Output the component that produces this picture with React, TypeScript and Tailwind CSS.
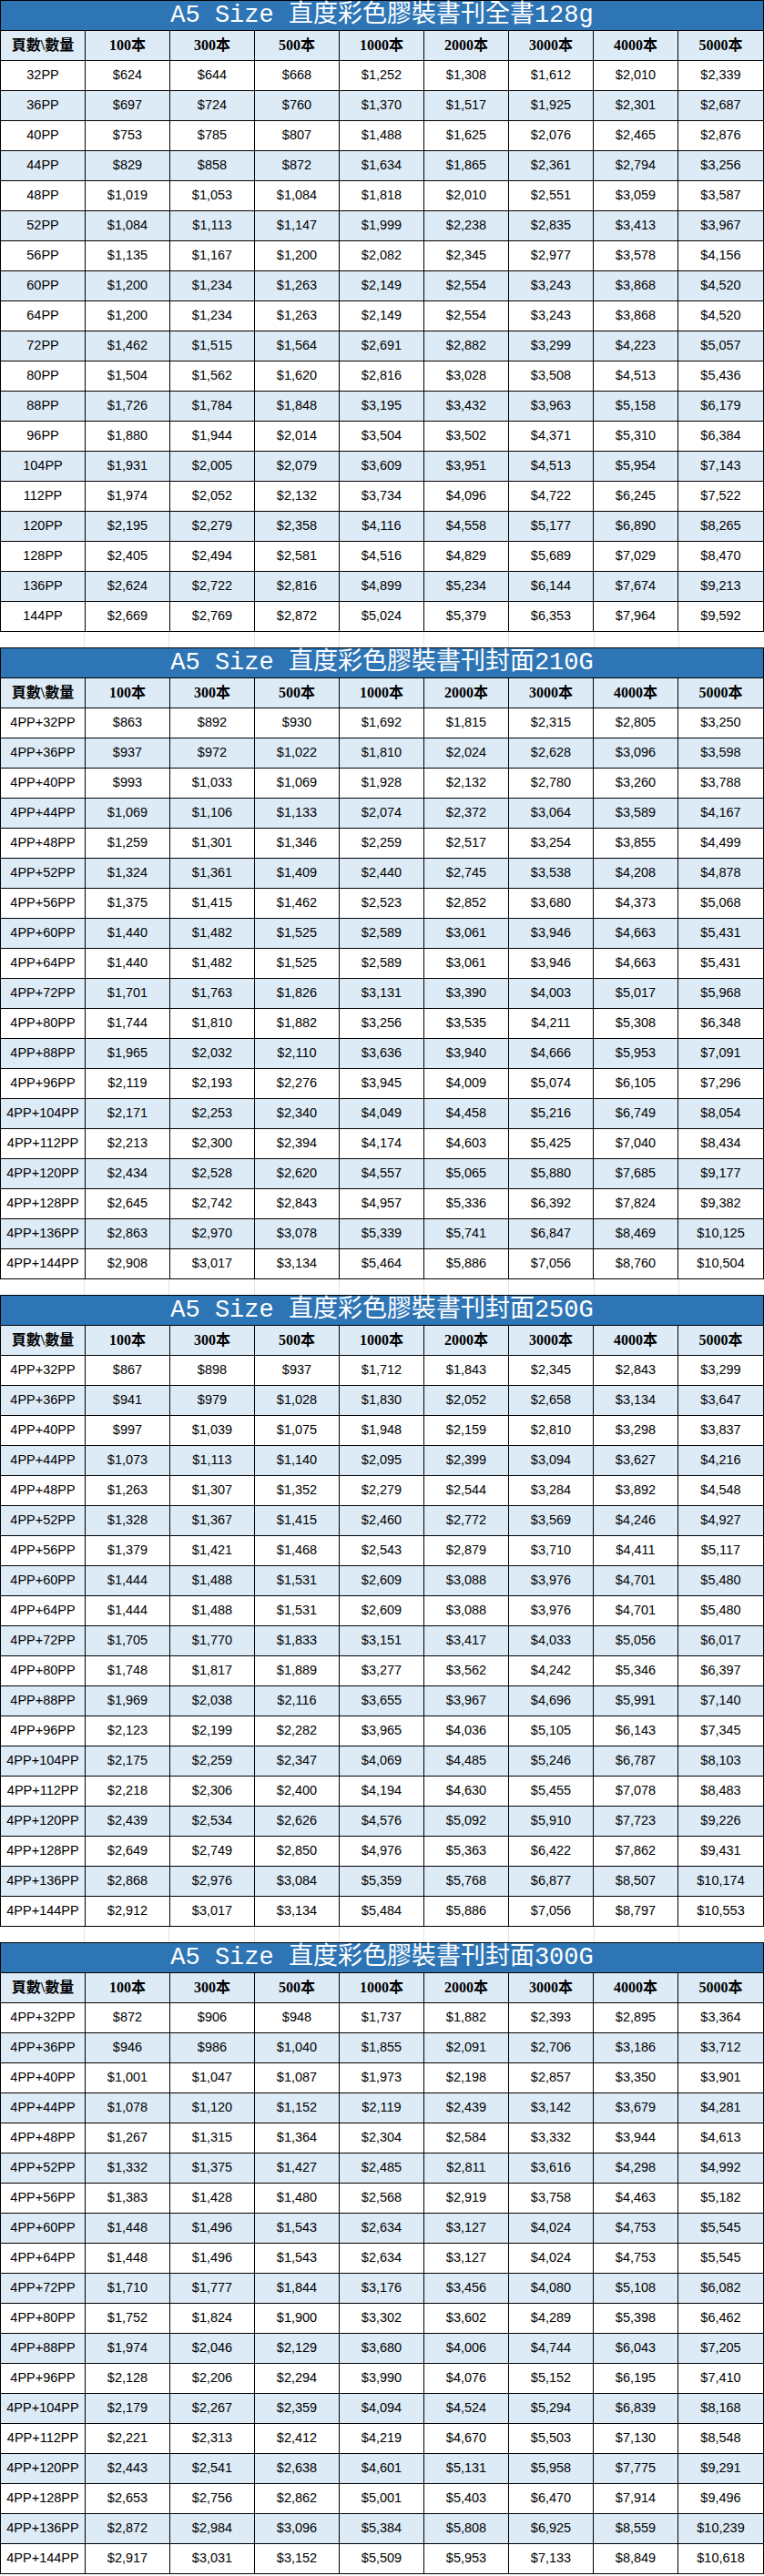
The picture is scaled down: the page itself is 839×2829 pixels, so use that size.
const cols = ['100本', '300本', '500本', '1000本', '2000本', '3000本', '4000本', '5000本'];

type Row = [string, ...string[]];

const t128: Row[] = [
  ['32PP', '$624', '$644', '$668', '$1,252', '$1,308', '$1,612', '$2,010', '$2,339'],
  ['36PP', '$697', '$724', '$760', '$1,370', '$1,517', '$1,925', '$2,301', '$2,687'],
  ['40PP', '$753', '$785', '$807', '$1,488', '$1,625', '$2,076', '$2,465', '$2,876'],
  ['44PP', '$829', '$858', '$872', '$1,634', '$1,865', '$2,361', '$2,794', '$3,256'],
  ['48PP', '$1,019', '$1,053', '$1,084', '$1,818', '$2,010', '$2,551', '$3,059', '$3,587'],
  ['52PP', '$1,084', '$1,113', '$1,147', '$1,999', '$2,238', '$2,835', '$3,413', '$3,967'],
  ['56PP', '$1,135', '$1,167', '$1,200', '$2,082', '$2,345', '$2,977', '$3,578', '$4,156'],
  ['60PP', '$1,200', '$1,234', '$1,263', '$2,149', '$2,554', '$3,243', '$3,868', '$4,520'],
  ['64PP', '$1,200', '$1,234', '$1,263', '$2,149', '$2,554', '$3,243', '$3,868', '$4,520'],
  ['72PP', '$1,462', '$1,515', '$1,564', '$2,691', '$2,882', '$3,299', '$4,223', '$5,057'],
  ['80PP', '$1,504', '$1,562', '$1,620', '$2,816', '$3,028', '$3,508', '$4,513', '$5,436'],
  ['88PP', '$1,726', '$1,784', '$1,848', '$3,195', '$3,432', '$3,963', '$5,158', '$6,179'],
  ['96PP', '$1,880', '$1,944', '$2,014', '$3,504', '$3,502', '$4,371', '$5,310', '$6,384'],
  ['104PP', '$1,931', '$2,005', '$2,079', '$3,609', '$3,951', '$4,513', '$5,954', '$7,143'],
  ['112PP', '$1,974', '$2,052', '$2,132', '$3,734', '$4,096', '$4,722', '$6,245', '$7,522'],
  ['120PP', '$2,195', '$2,279', '$2,358', '$4,116', '$4,558', '$5,177', '$6,890', '$8,265'],
  ['128PP', '$2,405', '$2,494', '$2,581', '$4,516', '$4,829', '$5,689', '$7,029', '$8,470'],
  ['136PP', '$2,624', '$2,722', '$2,816', '$4,899', '$5,234', '$6,144', '$7,674', '$9,213'],
  ['144PP', '$2,669', '$2,769', '$2,872', '$5,024', '$5,379', '$6,353', '$7,964', '$9,592'],
];

const t210: Row[] = [
  ['4PP+32PP', '$863', '$892', '$930', '$1,692', '$1,815', '$2,315', '$2,805', '$3,250'],
  ['4PP+36PP', '$937', '$972', '$1,022', '$1,810', '$2,024', '$2,628', '$3,096', '$3,598'],
  ['4PP+40PP', '$993', '$1,033', '$1,069', '$1,928', '$2,132', '$2,780', '$3,260', '$3,788'],
  ['4PP+44PP', '$1,069', '$1,106', '$1,133', '$2,074', '$2,372', '$3,064', '$3,589', '$4,167'],
  ['4PP+48PP', '$1,259', '$1,301', '$1,346', '$2,259', '$2,517', '$3,254', '$3,855', '$4,499'],
  ['4PP+52PP', '$1,324', '$1,361', '$1,409', '$2,440', '$2,745', '$3,538', '$4,208', '$4,878'],
  ['4PP+56PP', '$1,375', '$1,415', '$1,462', '$2,523', '$2,852', '$3,680', '$4,373', '$5,068'],
  ['4PP+60PP', '$1,440', '$1,482', '$1,525', '$2,589', '$3,061', '$3,946', '$4,663', '$5,431'],
  ['4PP+64PP', '$1,440', '$1,482', '$1,525', '$2,589', '$3,061', '$3,946', '$4,663', '$5,431'],
  ['4PP+72PP', '$1,701', '$1,763', '$1,826', '$3,131', '$3,390', '$4,003', '$5,017', '$5,968'],
  ['4PP+80PP', '$1,744', '$1,810', '$1,882', '$3,256', '$3,535', '$4,211', '$5,308', '$6,348'],
  ['4PP+88PP', '$1,965', '$2,032', '$2,110', '$3,636', '$3,940', '$4,666', '$5,953', '$7,091'],
  ['4PP+96PP', '$2,119', '$2,193', '$2,276', '$3,945', '$4,009', '$5,074', '$6,105', '$7,296'],
  ['4PP+104PP', '$2,171', '$2,253', '$2,340', '$4,049', '$4,458', '$5,216', '$6,749', '$8,054'],
  ['4PP+112PP', '$2,213', '$2,300', '$2,394', '$4,174', '$4,603', '$5,425', '$7,040', '$8,434'],
  ['4PP+120PP', '$2,434', '$2,528', '$2,620', '$4,557', '$5,065', '$5,880', '$7,685', '$9,177'],
  ['4PP+128PP', '$2,645', '$2,742', '$2,843', '$4,957', '$5,336', '$6,392', '$7,824', '$9,382'],
  ['4PP+136PP', '$2,863', '$2,970', '$3,078', '$5,339', '$5,741', '$6,847', '$8,469', '$10,125'],
  ['4PP+144PP', '$2,908', '$3,017', '$3,134', '$5,464', '$5,886', '$7,056', '$8,760', '$10,504'],
];

const t250: Row[] = [
  ['4PP+32PP', '$867', '$898', '$937', '$1,712', '$1,843', '$2,345', '$2,843', '$3,299'],
  ['4PP+36PP', '$941', '$979', '$1,028', '$1,830', '$2,052', '$2,658', '$3,134', '$3,647'],
  ['4PP+40PP', '$997', '$1,039', '$1,075', '$1,948', '$2,159', '$2,810', '$3,298', '$3,837'],
  ['4PP+44PP', '$1,073', '$1,113', '$1,140', '$2,095', '$2,399', '$3,094', '$3,627', '$4,216'],
  ['4PP+48PP', '$1,263', '$1,307', '$1,352', '$2,279', '$2,544', '$3,284', '$3,892', '$4,548'],
  ['4PP+52PP', '$1,328', '$1,367', '$1,415', '$2,460', '$2,772', '$3,569', '$4,246', '$4,927'],
  ['4PP+56PP', '$1,379', '$1,421', '$1,468', '$2,543', '$2,879', '$3,710', '$4,411', '$5,117'],
  ['4PP+60PP', '$1,444', '$1,488', '$1,531', '$2,609', '$3,088', '$3,976', '$4,701', '$5,480'],
  ['4PP+64PP', '$1,444', '$1,488', '$1,531', '$2,609', '$3,088', '$3,976', '$4,701', '$5,480'],
  ['4PP+72PP', '$1,705', '$1,770', '$1,833', '$3,151', '$3,417', '$4,033', '$5,056', '$6,017'],
  ['4PP+80PP', '$1,748', '$1,817', '$1,889', '$3,277', '$3,562', '$4,242', '$5,346', '$6,397'],
  ['4PP+88PP', '$1,969', '$2,038', '$2,116', '$3,655', '$3,967', '$4,696', '$5,991', '$7,140'],
  ['4PP+96PP', '$2,123', '$2,199', '$2,282', '$3,965', '$4,036', '$5,105', '$6,143', '$7,345'],
  ['4PP+104PP', '$2,175', '$2,259', '$2,347', '$4,069', '$4,485', '$5,246', '$6,787', '$8,103'],
  ['4PP+112PP', '$2,218', '$2,306', '$2,400', '$4,194', '$4,630', '$5,455', '$7,078', '$8,483'],
  ['4PP+120PP', '$2,439', '$2,534', '$2,626', '$4,576', '$5,092', '$5,910', '$7,723', '$9,226'],
  ['4PP+128PP', '$2,649', '$2,749', '$2,850', '$4,976', '$5,363', '$6,422', '$7,862', '$9,431'],
  ['4PP+136PP', '$2,868', '$2,976', '$3,084', '$5,359', '$5,768', '$6,877', '$8,507', '$10,174'],
  ['4PP+144PP', '$2,912', '$3,017', '$3,134', '$5,484', '$5,886', '$7,056', '$8,797', '$10,553'],
];

const t300: Row[] = [
  ['4PP+32PP', '$872', '$906', '$948', '$1,737', '$1,882', '$2,393', '$2,895', '$3,364'],
  ['4PP+36PP', '$946', '$986', '$1,040', '$1,855', '$2,091', '$2,706', '$3,186', '$3,712'],
  ['4PP+40PP', '$1,001', '$1,047', '$1,087', '$1,973', '$2,198', '$2,857', '$3,350', '$3,901'],
  ['4PP+44PP', '$1,078', '$1,120', '$1,152', '$2,119', '$2,439', '$3,142', '$3,679', '$4,281'],
  ['4PP+48PP', '$1,267', '$1,315', '$1,364', '$2,304', '$2,584', '$3,332', '$3,944', '$4,613'],
  ['4PP+52PP', '$1,332', '$1,375', '$1,427', '$2,485', '$2,811', '$3,616', '$4,298', '$4,992'],
  ['4PP+56PP', '$1,383', '$1,428', '$1,480', '$2,568', '$2,919', '$3,758', '$4,463', '$5,182'],
  ['4PP+60PP', '$1,448', '$1,496', '$1,543', '$2,634', '$3,127', '$4,024', '$4,753', '$5,545'],
  ['4PP+64PP', '$1,448', '$1,496', '$1,543', '$2,634', '$3,127', '$4,024', '$4,753', '$5,545'],
  ['4PP+72PP', '$1,710', '$1,777', '$1,844', '$3,176', '$3,456', '$4,080', '$5,108', '$6,082'],
  ['4PP+80PP', '$1,752', '$1,824', '$1,900', '$3,302', '$3,602', '$4,289', '$5,398', '$6,462'],
  ['4PP+88PP', '$1,974', '$2,046', '$2,129', '$3,680', '$4,006', '$4,744', '$6,043', '$7,205'],
  ['4PP+96PP', '$2,128', '$2,206', '$2,294', '$3,990', '$4,076', '$5,152', '$6,195', '$7,410'],
  ['4PP+104PP', '$2,179', '$2,267', '$2,359', '$4,094', '$4,524', '$5,294', '$6,839', '$8,168'],
  ['4PP+112PP', '$2,221', '$2,313', '$2,412', '$4,219', '$4,670', '$5,503', '$7,130', '$8,548'],
  ['4PP+120PP', '$2,443', '$2,541', '$2,638', '$4,601', '$5,131', '$5,958', '$7,775', '$9,291'],
  ['4PP+128PP', '$2,653', '$2,756', '$2,862', '$5,001', '$5,403', '$6,470', '$7,914', '$9,496'],
  ['4PP+136PP', '$2,872', '$2,984', '$3,096', '$5,384', '$5,808', '$6,925', '$8,559', '$10,239'],
  ['4PP+144PP', '$2,917', '$3,031', '$3,152', '$5,509', '$5,953', '$7,133', '$8,849', '$10,618'],
];

const tables = [
  { title: 'A5 Size 直度彩色膠裝書刊全書128g', rows: t128 },
  { title: 'A5 Size 直度彩色膠裝書刊封面210G', rows: t210 },
  { title: 'A5 Size 直度彩色膠裝書刊封面250G', rows: t250 },
  { title: 'A5 Size 直度彩色膠裝書刊封面300G', rows: t300 },
];

function PriceTable({ title, rows }: { title: string; rows: Row[] }) {
  return (
    <div className="border-t border-x border-black">
      <div className="h-[33px] border-b border-black bg-[#2e75b6] flex items-center justify-center text-white text-[27px] leading-none font-['Liberation_Mono','Noto_Sans_CJK_TC',monospace] whitespace-pre">
        {title}
      </div>
      <div className="grid grid-cols-9 h-[33px] border-b border-black bg-[#ddebf7] font-bold text-[16px] text-black font-['Liberation_Serif','Noto_Sans_CJK_TC',serif]">
        <div className="flex items-center justify-center border-r border-black">頁數\數量</div>
        {cols.map((c, i) => (
          <div
            key={c}
            className={`flex items-center justify-center ${i < cols.length - 1 ? 'border-r border-black' : ''}`}
          >
            {c}
          </div>
        ))}
      </div>
      {rows.map((r, ri) => (
        <div
          key={r[0]}
          className={`grid grid-cols-9 h-[33px] border-b border-black text-[14.5px] text-black font-['Liberation_Sans',Arial,sans-serif] ${
            ri % 2 === 1 ? 'bg-[#ddebf7]' : 'bg-white'
          }`}
        >
          {r.map((v, i) => (
            <div
              key={i}
              className={`flex items-center justify-center whitespace-nowrap ${i < r.length - 1 ? 'border-r border-black' : ''}`}
            >
              {v}
            </div>
          ))}
        </div>
      ))}
    </div>
  );
}

function Gap() {
  return (
    <div className="grid grid-cols-9 h-[17px] bg-white">
      {Array.from({ length: 9 }).map((_, i) => (
        <div key={i} className={i < 8 ? 'border-r border-[#e2e2e2]' : ''} />
      ))}
    </div>
  );
}

export default function App() {
  return (
    <div className="w-[839px] bg-white">
      {tables.map((t, i) => (
        <div key={t.title}>
          {i > 0 && <Gap />}
          <PriceTable title={t.title} rows={t.rows} />
        </div>
      ))}
    </div>
  );
}
